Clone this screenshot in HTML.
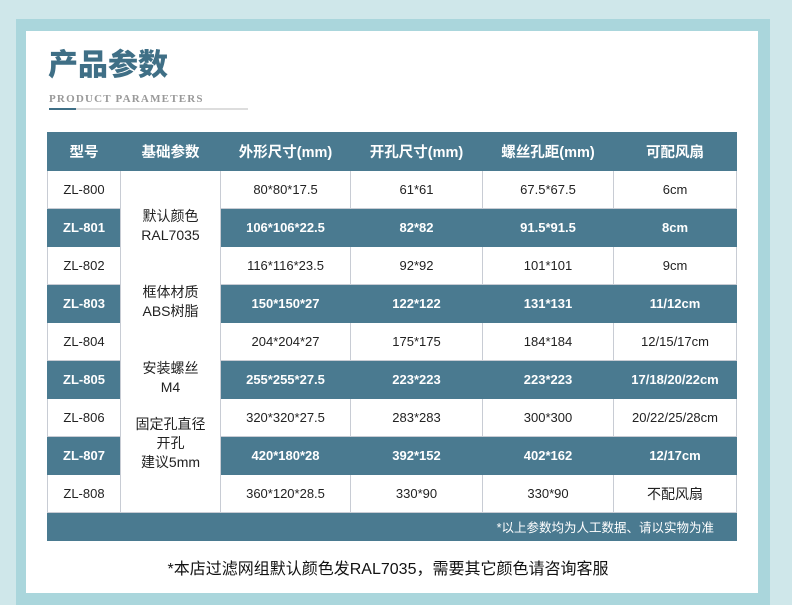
<!DOCTYPE html>
<html><head><meta charset="utf-8"><style>
body{margin:0;width:792px;height:605px;background:#cfe7ea;position:relative;overflow:hidden;font-family:"Liberation Sans","Noto Sans CJK SC",sans-serif}
.band{position:absolute;left:16px;top:19px;width:754px;height:586px;background:#aad6dc}
.white{position:absolute;left:26px;top:31px;width:732px;height:562px;background:#fff}
.title{position:absolute;left:48px;top:46px;font-size:30px;font-weight:900;color:#3f6f86;line-height:40px}
.sub{position:absolute;left:49px;top:93px;font-family:"Liberation Serif",serif;font-weight:bold;font-size:11px;color:#999;letter-spacing:1.2px}
.line{position:absolute;left:49px;top:108px;width:199px;height:2px;background:#ddd}
.line i{position:absolute;left:0;top:0;width:27px;height:2px;background:#3f6f86}
table{position:absolute;left:47px;top:132px;border-collapse:collapse;table-layout:fixed}
td{height:38px;padding:0;text-align:center;font-size:13px;color:#222;border:1px solid #c8ccd4;box-sizing:border-box}
tr.h td{background:#4a7a90;color:#fff;font-weight:bold;font-size:14.5px;border-color:#4a7a90}
tr.d td{background:#4a7a90;color:#fff;font-weight:bold;border-color:#4a7a90}
tr.d td.m,td.m{background:#fff;color:#222;font-weight:normal;font-size:14px;line-height:19px;border:1px solid #c8ccd4}
.foot td{height:28px;background:#4a7a90;color:#fff;text-align:right;padding-right:22px;font-size:12.5px;border-color:#4a7a90}
.note{position:absolute;left:0;width:792px;top:555px;text-align:center;font-size:16px;color:#111;padding-right:16px;box-sizing:border-box}
</style></head><body>
<div class="band"></div><div class="white"></div>
<div class="title">产品参数</div>
<div class="sub">PRODUCT PARAMETERS</div>
<div class="line"><i></i></div>
<table>
<colgroup><col style="width:73px"><col style="width:100px"><col style="width:130px"><col style="width:132px"><col style="width:131px"><col style="width:123px"></colgroup>
<tr class="h"><td>型号</td><td>基础参数</td><td>外形尺寸(mm)</td><td>开孔尺寸(mm)</td><td>螺丝孔距(mm)</td><td>可配风扇</td></tr>
<tr><td>ZL-800</td><td class="m" rowspan="9"><div style="position:relative;height:340px">
<div style="position:absolute;top:35px;width:100%">默认颜色<br>RAL7035</div>
<div style="position:absolute;top:111px;width:100%">框体材质<br>ABS树脂</div>
<div style="position:absolute;top:187px;width:100%">安装螺丝<br>M4</div>
<div style="position:absolute;top:243px;width:100%">固定孔直径<br>开孔<br>建议5mm</div>
</div></td><td>80*80*17.5</td><td>61*61</td><td>67.5*67.5</td><td>6cm</td></tr>
<tr class="d"><td>ZL-801</td><td>106*106*22.5</td><td>82*82</td><td>91.5*91.5</td><td>8cm</td></tr>
<tr><td>ZL-802</td><td>116*116*23.5</td><td>92*92</td><td>101*101</td><td>9cm</td></tr>
<tr class="d"><td>ZL-803</td><td>150*150*27</td><td>122*122</td><td>131*131</td><td>11/12cm</td></tr>
<tr><td>ZL-804</td><td>204*204*27</td><td>175*175</td><td>184*184</td><td>12/15/17cm</td></tr>
<tr class="d"><td>ZL-805</td><td>255*255*27.5</td><td>223*223</td><td>223*223</td><td>17/18/20/22cm</td></tr>
<tr><td>ZL-806</td><td>320*320*27.5</td><td>283*283</td><td>300*300</td><td>20/22/25/28cm</td></tr>
<tr class="d"><td>ZL-807</td><td>420*180*28</td><td>392*152</td><td>402*162</td><td>12/17cm</td></tr>
<tr><td>ZL-808</td><td>360*120*28.5</td><td>330*90</td><td>330*90</td><td style="font-size:14px">不配风扇</td></tr>
<tr class="foot"><td colspan="6">*以上参数均为人工数据、请以实物为准</td></tr>
</table>
<div class="note">*本店过滤网组默认颜色发RAL7035，需要其它颜色请咨询客服</div>
</body></html>
